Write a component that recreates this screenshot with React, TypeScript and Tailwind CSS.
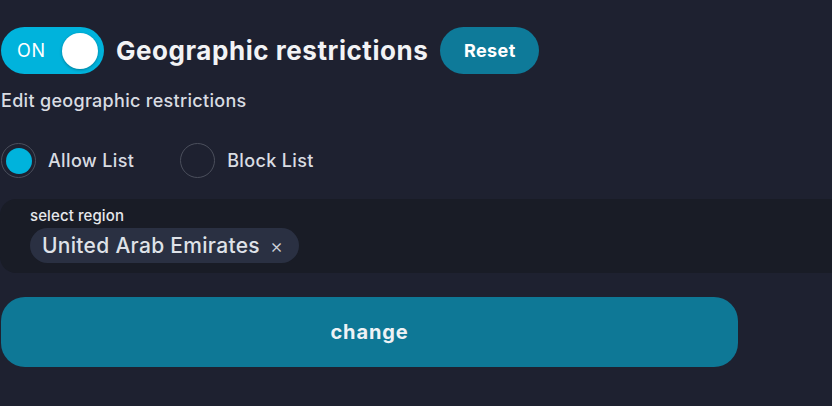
import React from "react";

export default function App() {
  return (
    <div
      className="w-[832px] h-[406px] overflow-hidden bg-[#1e2130] text-[#e6e8ec]"
      style={{ fontFamily: "Inter, 'Noto Sans', sans-serif" }}
    >
      <div className="pt-[27px] pl-[1px] flex items-center">
        <div className="w-[103px] h-[47px] rounded-full bg-[#00b3dc] flex items-center justify-between pl-[16px] pr-[6px]">
          <span className="text-[18px] tracking-[0.8px] text-white font-normal">ON</span>
          <span className="w-[36px] h-[36px] rounded-full bg-white shadow-[0_1px_3px_rgba(0,0,0,0.3)]" />
        </div>
        <h1 className="ml-[12px] text-[26px] font-bold text-[#f2f3f5] tracking-[0.55px]">
          Geographic restrictions
        </h1>
        <button className="ml-[12px] w-[99px] h-[47px] rounded-full bg-[#0e7a99] text-white text-[18px] font-bold tracking-[0.4px]">
          Reset
        </button>
      </div>
      <p className="mt-[16px] pl-[1px] text-[18px] leading-[22px] font-medium tracking-[0.3px] text-[#d9dce2]">
        Edit geographic restrictions
      </p>
      <div className="mt-[31px] pl-[1px] flex items-center">
        <div className="flex items-center">
          <span className="w-[35px] h-[35px] rounded-full border border-[#4b4f5c] flex items-center justify-center">
            <span className="w-[26px] h-[26px] rounded-full bg-[#00b3dc]" />
          </span>
          <span className="ml-[12px] text-[18px] font-medium tracking-[0.35px] text-[#d9dce2]">Allow List</span>
        </div>
        <div className="ml-[46px] flex items-center">
          <span className="w-[35px] h-[35px] rounded-full border border-[#4b4f5c]" />
          <span className="ml-[12px] text-[18px] font-medium tracking-[0.35px] text-[#d9dce2]">Block List</span>
        </div>
      </div>
      <div className="mt-[21px] w-[900px] h-[74px] rounded-[16px] bg-[#191c26] pl-[30px] pt-[7px]">
        <div className="text-[15px] leading-[20px] font-medium tracking-[0.1px] text-[#e6e8ec]">select region</div>
        <div className="mt-[2px] inline-flex items-center h-[35px] rounded-full bg-[#2a3042] pl-[12px] pr-[16px]">
          <span className="text-[21px] font-medium tracking-[0.3px] text-[#dfe2e8]">United Arab Emirates</span>
          <span className="ml-[10px] text-[20px] font-light text-[#cfd3da]">×</span>
        </div>
      </div>
      <button className="mt-[24px] ml-[1px] w-[737px] h-[70px] rounded-[24px] bg-[#0e7896] text-[20px] font-bold tracking-[0.9px] text-[#eef2f5]">
        change
      </button>
    </div>
  );
}
